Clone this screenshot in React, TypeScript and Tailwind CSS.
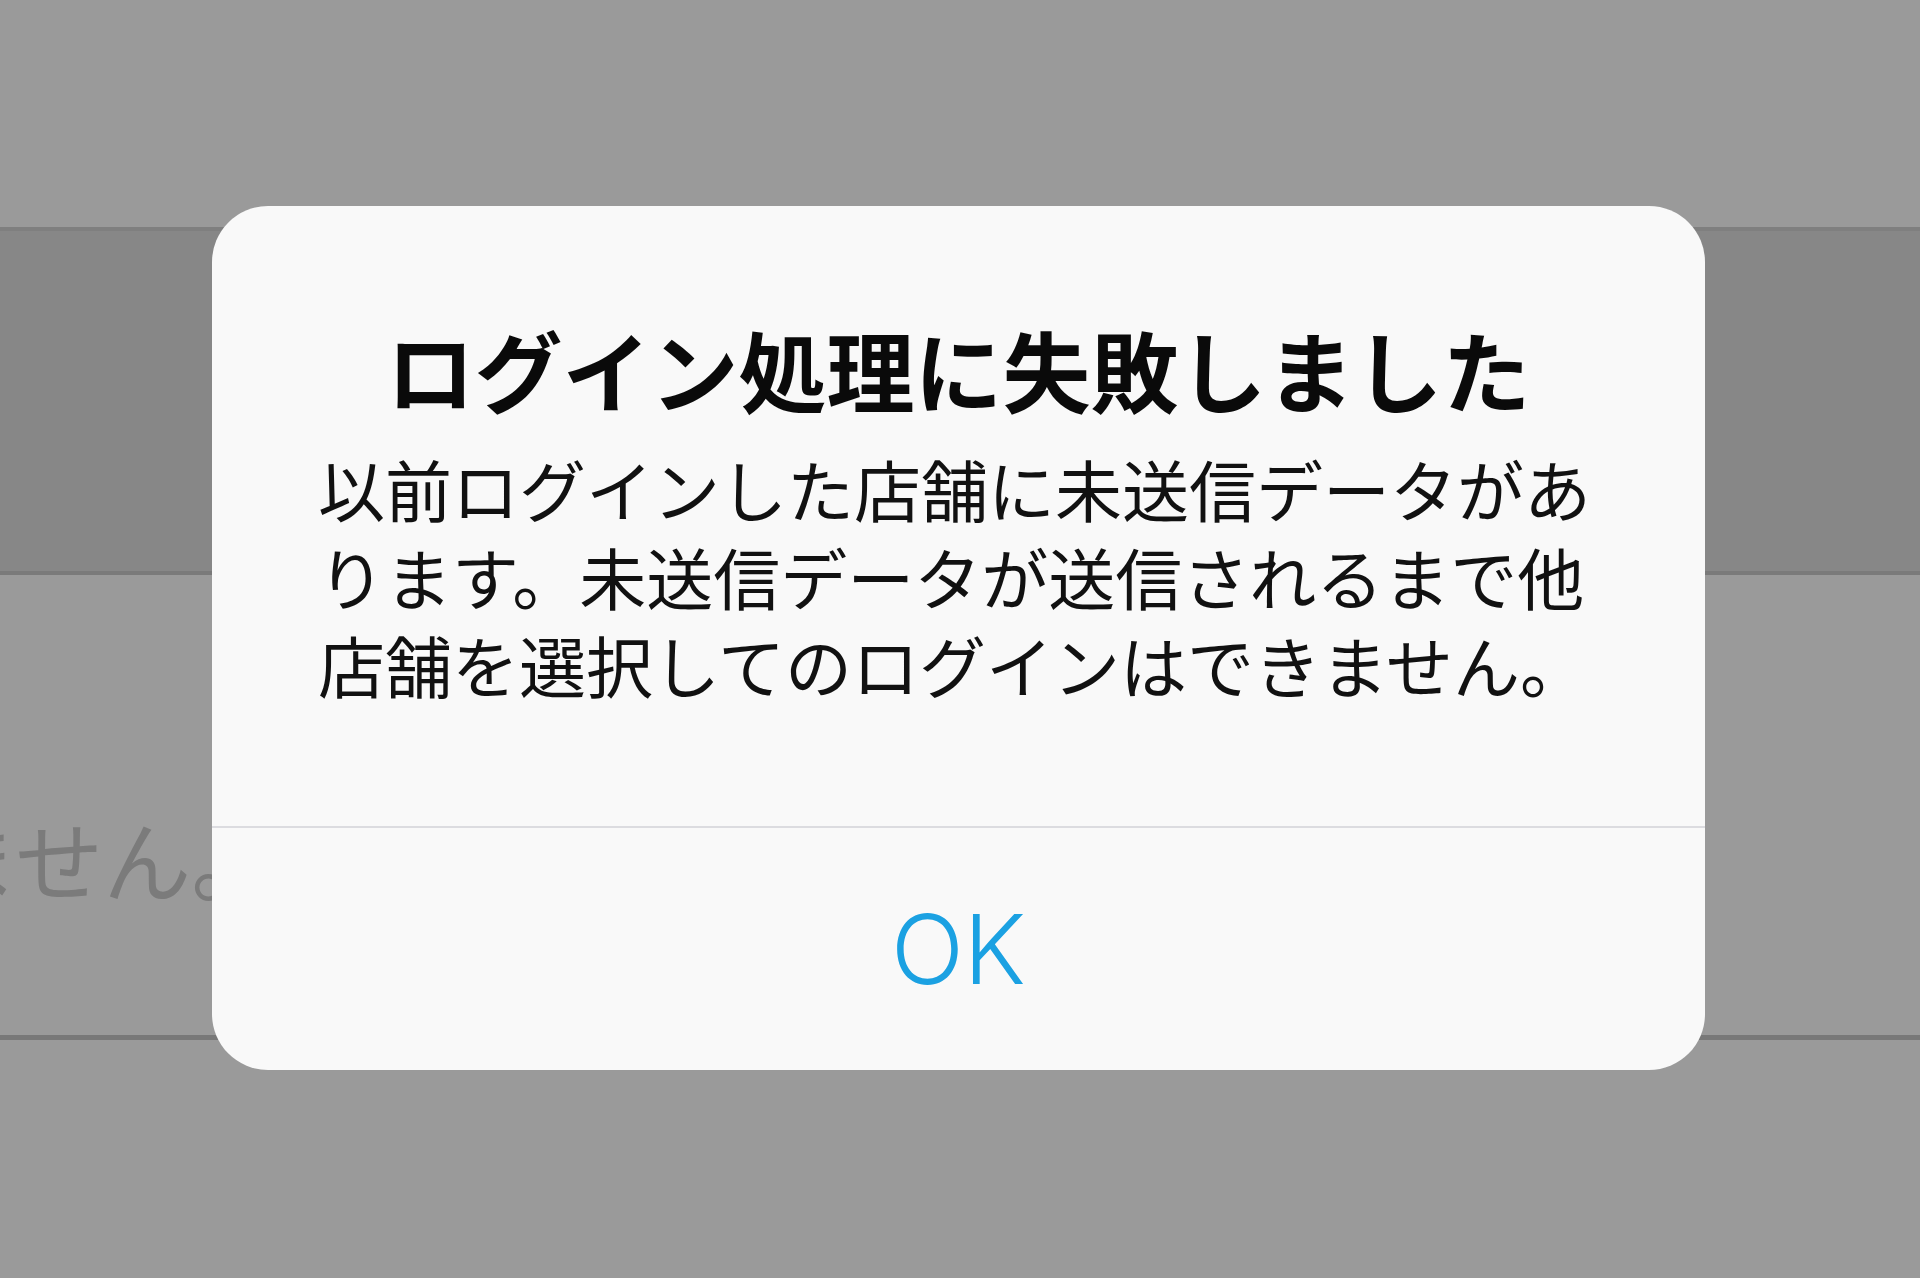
import React from "react";

export default function App() {
  return (
    <div className="relative w-full h-[1278px] overflow-hidden bg-[#9a9a9a] flex flex-col" style={{ fontFamily: '"Noto Sans CJK JP", "Noto Sans", sans-serif' }}>
      {/* background page */}
      <div className="h-[227px] shrink-0 bg-[#9a9a9a]" />
      <div className="h-[348px] shrink-0 bg-[#878787] border-t-4 border-t-[#7f7f7f] border-b-4 border-b-[#7a7a7a]" />
      <div className="h-[460px] shrink-0 bg-[#9a9a9a] pt-[238px] overflow-hidden">
        <div className="ml-[-70px] whitespace-nowrap text-[88px] leading-[88px] text-[#7b7b7b]">ません。</div>
      </div>
      <div className="h-[5px] shrink-0 bg-[#787878]" />
      <div className="flex-1 bg-[#9a9a9a]" />

      {/* alert dialog */}
      <div className="absolute left-[212px] top-[206px] w-[1493px] h-[864px] rounded-[56px] bg-[#f9f9f9] flex flex-col overflow-hidden">
        <div className="h-[620px] shrink-0 pt-[112px] flex flex-col">
          <div className="text-center whitespace-nowrap text-[88px] leading-[100px] font-bold text-[#0a0a0a]">
            ログイン処理に失敗しました
          </div>
          <div className="mt-[26px] ml-[106px] text-[67px] leading-[88px] text-[#111111] whitespace-nowrap">
            <div>以前ログインした店舗に未送信データがあ</div>
            <div>ります。未送信データが送信されるまで他</div>
            <div>店舗を選択してのログインはできません。</div>
          </div>
        </div>
        <div className="h-[2px] shrink-0 bg-[#dcdce0]" />
        <div className="flex-1 flex items-center justify-center">
          <span className="text-[96px] leading-none font-light text-[#1ba1e2]" style={{ fontFamily: 'Inter, "Liberation Sans", sans-serif' }}>
            OK
          </span>
        </div>
      </div>
    </div>
  );
}
